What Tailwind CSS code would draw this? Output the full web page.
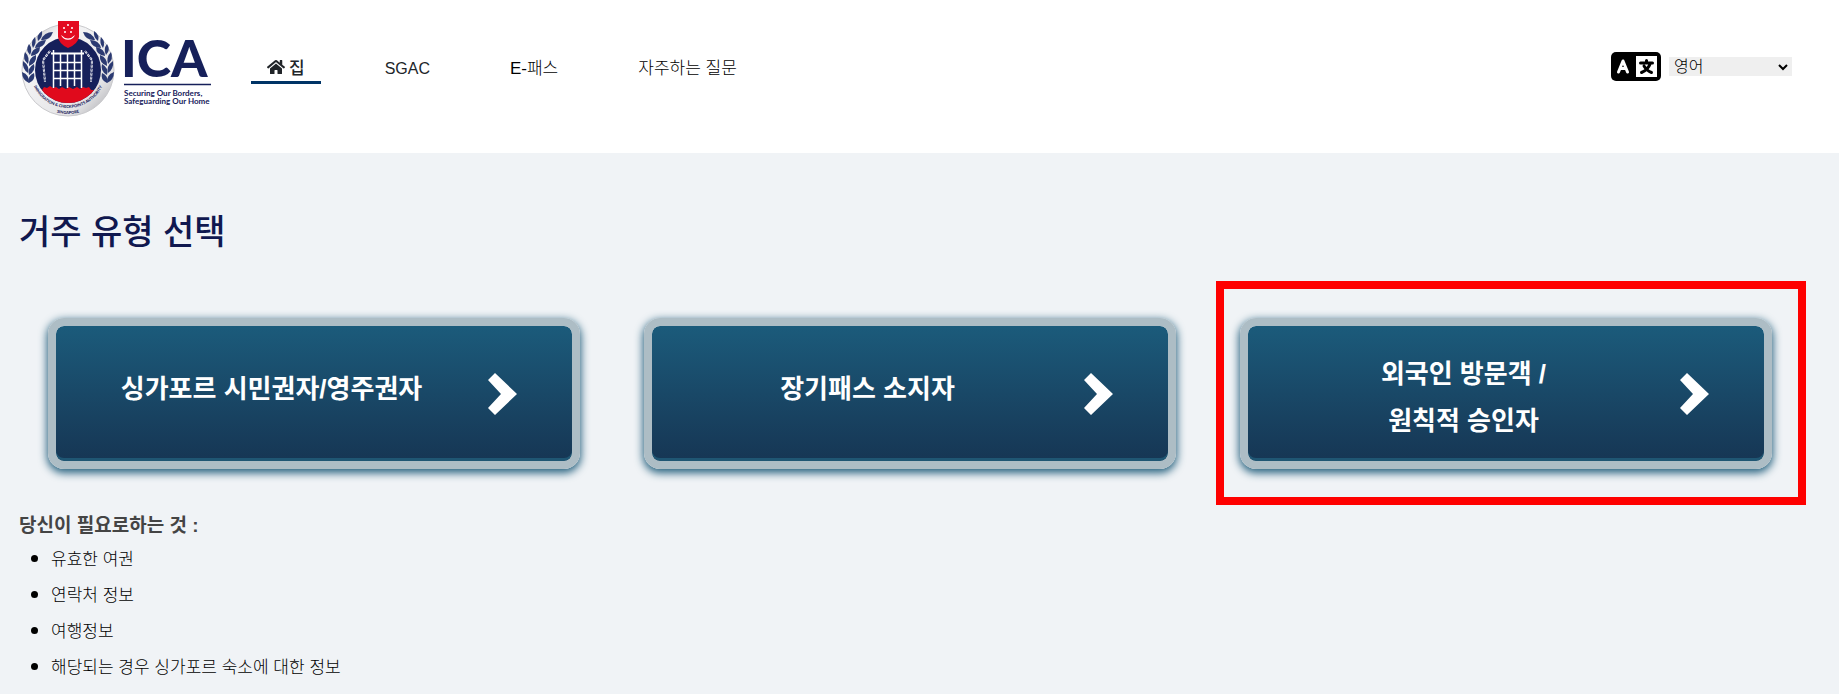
<!DOCTYPE html>
<html lang="ko">
  <head>
    <meta charset="UTF-8" />
    <meta name="viewport" content="width=device-width, initial-scale=1.0" />
    <title>ICA - 거주 유형 선택</title>
    <script src="https://cdn.jsdelivr.net/npm/@tailwindcss/browser@4"></script>
    <style>
      body {
        font-family: "Liberation Sans", "Noto Sans CJK KR", sans-serif;
      }
    </style>
  </head>
  <body class="min-h-screen bg-[#f0f3f6] text-[#212529]">
    <header class="bg-white flex items-start pl-4 pr-[47px] pb-8">
      <a href="#" class="mt-4 shrink-0" aria-label="ICA">
        <svg class="w-[200px] h-[105px]" viewBox="16 16 200 105">
          <defs>
            <linearGradient id="silver" x1="0" y1="0" x2="1" y2="1">
              <stop offset="0" stop-color="#b5b5b8" />
              <stop offset="0.25" stop-color="#f6f6f7" />
              <stop offset="0.75" stop-color="#e4e4e6" />
              <stop offset="1" stop-color="#a2a2a6" />
            </linearGradient>
            <clipPath id="disc"><circle cx="68" cy="70" r="33" /></clipPath>
            <path id="arcOuter" d="M30 70 A38 38 0 0 0 106 70" />
            <path id="arcInner" d="M24 70 A44 44 0 0 0 112 70" />
            <g id="laurel" fill="#2b3a72">
              <path d="M53 32 q-9 0 -12 8 q9 1 12 -8z" />
              <path d="M42 31 q-6 4 -4 10 q5 -4 4 -10z" />
              <path d="M46 40 q-9 0 -11 8 q9 0 11 -8z" />
              <path d="M35 37 q-5 5 -2 11 q4 -5 2 -11z" />
              <path d="M40 47 q-9 2 -9 9 q9 -1 9 -9z" />
              <path d="M29 44 q-4 6 1 11 q3 -6 -1 -11z" />
              <path d="M36 55 q-8 3 -7 11 q8 -3 7 -11z" />
              <path d="M25 52 q-3 7 3 12 q2 -7 -3 -12z" />
              <path d="M34 64 q-7 4 -5 11 q7 -4 5 -11z" />
              <path d="M23 61 q-1 8 5 12 q2 -7 -5 -12z" />
              <path d="M34 73 q-7 3 -5 10 q7 -3 5 -10z" />
              <path d="M22 72 q0 8 7 11 q1 -8 -7 -11z" />
            </g>
          </defs>
          <circle cx="68" cy="70" r="46" fill="url(#silver)" stroke="#c9c9cc" />
          <use href="#laurel" />
          <use href="#laurel" transform="translate(136 0) scale(-1 1)" />
          <circle cx="68" cy="70" r="33" fill="#16205a" />
          <g clip-path="url(#disc)">
            <path
              d="M34 110 V91 l8 -1 2 -3 3 1 3 -2 3 2 3 -1 3 2 3 -2 4 2 3 -2 4 2 4 -2 3 2 3 -2 3 1 3 -1 2 3 h12 V110z"
              fill="#e00a1c"
            />
          </g>
          <!-- portcullis -->
          <g fill="none" stroke="#fff">
            <path d="M51 53.500H84" stroke-width="2" />
            <path d="M53.500 50V88M60.500 54V86M67.500 54V88M74.500 54V86M81.500 50V88" stroke-width="1.500" />
            <path d="M54 62.500H82M54 70.500H82M54 78.500H82" stroke-width="1.500" />
          </g>
          <!-- chains -->
          <g fill="none" stroke="#fff" stroke-width="2" stroke-dasharray="3 1">
            <path d="M50 51 L43 60 L45 82" />
            <path d="M85 51 L92 60 L91 82" />
          </g>
          <path
            d="M50 51 L43 60 L45 82M85 51 L92 60 L91 82"
            fill="none"
            stroke="#16205a"
            stroke-width="0.700"
            stroke-dasharray="2 2"
          />
          <!-- shield -->
          <path d="M58 21 H79 V37 Q78 44 68 48 Q59 44 58 37z" fill="#e30b20" />
          <path d="M61 35 A7.500 7.500 0 0 0 75 35 Q68 42 61 35z" fill="#fff" />
          <g fill="#fff">
            <circle cx="68" cy="25" r="1" />
            <circle cx="64" cy="28" r="1" />
            <circle cx="72" cy="28" r="1" />
            <circle cx="65" cy="32" r="1" />
            <circle cx="71" cy="32" r="1" />
          </g>
          <g fill="#16205a" font-family="Lato, sans-serif" font-weight="900">
            <text font-size="4" text-anchor="middle">
              <textPath href="#arcOuter" startOffset="50%">IMMIGRATION &amp; CHECKPOINTS AUTHORITY</textPath>
            </text>
            <text font-size="4" text-anchor="middle">
              <textPath href="#arcInner" startOffset="50%">SINGAPORE</textPath>
            </text>
            <text x="121" y="77" font-size="52">ICA</text>
          </g>
          <path d="M124 84.500H211" stroke="#16205a" stroke-width="1.500" />
          <g fill="#16205a" font-family="Lato, sans-serif" font-weight="700" font-size="8">
            <text x="124" y="96">Securing Our Borders,</text>
            <text x="124" y="104">Safeguarding Our Home</text>
          </g>
        </svg>
      </a>

      <nav class="flex items-start gap-12 ml-[35px] mt-[52px] text-[17px] leading-8">
        <a href="#" class="flex items-center gap-1 px-4 h-8 border-b-3 border-[#003466] font-medium">
          <svg class="w-[18px] h-4" viewBox="0 0 576 512" fill="currentColor">
            <path
              d="M280 148 96 300v164a16 16 0 0 0 16 16h112a16 16 0 0 0 16-16v-96a16 16 0 0 1 16-16h64a16 16 0 0 1 16 16v96a16 16 0 0 0 16 16h112a16 16 0 0 0 16-16V300L296 148a12 12 0 0 0-16 0zM572 251 488 182V44a12 12 0 0 0-12-12h-56a12 12 0 0 0-12 12v72L318 43a48 48 0 0 0-61 0L4 251a12 12 0 0 0-2 17l26 31a12 12 0 0 0 17 2L280 107a12 12 0 0 1 15 0l236 194a12 12 0 0 0 17-2l25-31a12 12 0 0 0-1-17z"
            />
          </svg>
          <span class="pt-1">집</span>
        </a>
        <a href="#" class="px-4 pt-px text-base leading-8">SGAC</a>
        <a href="#" class="px-4 pt-px font-light text-black">E-패스</a>
        <a href="#" class="px-4 pt-px font-light text-black">자주하는 질문</a>
      </nav>

      <div class="ml-auto mt-[52px] flex items-center gap-2">
        <svg class="w-[50px] h-[29px]" viewBox="0 0 50 29">
          <rect width="50" height="29" rx="5" />
          <rect x="25" y="4" width="21" height="21" fill="#fff" />
          <path
            d="M7.500 20 L12 9 L16.500 20 M9 16.500 H15"
            fill="none"
            stroke="#fff"
            stroke-width="3"
            stroke-linecap="round"
            stroke-linejoin="round"
          />
          <path
            d="M29.500 11 H41.500 M35.500 8.500 V11 M39.500 11 Q37 18 30.500 20.500 M33 14 Q36 19 40.500 20.500"
            fill="none"
            stroke="#000"
            stroke-width="3"
            stroke-linecap="round"
          />
        </svg>
        <div class="relative">
          <select
            aria-label="언어"
            class="block appearance-none w-[123px] h-[19px] bg-[#efefef] pl-[5px] pr-6 text-base leading-[19px] font-light text-black"
          >
            <option>영어</option>
          </select>
          <svg class="absolute right-1 top-1.5 w-2.5 h-2 pointer-events-none" viewBox="0 0 10 8">
            <path d="M1 2 L5 6 L9 2" fill="none" stroke="#000" stroke-width="2" />
          </svg>
        </div>
      </div>
    </header>

    <main class="pt-[54px] pb-2">
      <h1 class="px-[19px] text-[34px] leading-[50px] font-medium text-[#10184f]">거주 유형 선택</h1>

      <div class="mt-[61px] pl-12 pr-[67px] grid grid-cols-3 gap-16">
        <button
          type="button"
          class="flex items-center h-[151px] pr-[55px] rounded-2xl border-8 border-[#adbdc5] bg-linear-to-b from-[#1b5b7b] to-[#163654] bg-clip-padding text-white text-[26px] leading-[47px] font-bold shadow-[inset_0_-3px_0_#1f5673,0_3px_8px_1px_#27627f]"
        >
          <span class="flex-1 pb-2">싱가포르 시민권자/영주권자</span>
          <svg class="w-[30px] h-[42px] shrink-0" viewBox="0 0 30 42" fill="currentColor">
            <path d="M8 0 L30 21 L8 42 L1 35 L14 21 L1 7z" />
          </svg>
        </button>
        <button
          type="button"
          class="flex items-center h-[151px] pr-[55px] rounded-2xl border-8 border-[#adbdc5] bg-linear-to-b from-[#1b5b7b] to-[#163654] bg-clip-padding text-white text-[26px] leading-[47px] font-bold shadow-[inset_0_-3px_0_#1f5673,0_3px_8px_1px_#27627f]"
        >
          <span class="flex-1 pb-2">장기패스 소지자</span>
          <svg class="w-[30px] h-[42px] shrink-0" viewBox="0 0 30 42" fill="currentColor">
            <path d="M8 0 L30 21 L8 42 L1 35 L14 21 L1 7z" />
          </svg>
        </button>
        <div class="relative">
          <button
            type="button"
            class="flex items-center w-full h-[151px] pr-[55px] rounded-2xl border-8 border-[#adbdc5] bg-linear-to-b from-[#1b5b7b] to-[#163654] bg-clip-padding text-white text-[26px] leading-[47px] font-bold shadow-[inset_0_-3px_0_#1f5673,0_3px_8px_1px_#27627f]"
          >
            <span class="flex-1 pt-2">외국인 방문객 /<br />원칙적 승인자</span>
            <svg class="w-[30px] h-[42px] shrink-0" viewBox="0 0 30 42" fill="currentColor">
              <path d="M8 0 L30 21 L8 42 L1 35 L14 21 L1 7z" />
            </svg>
          </button>
          <!-- highlight frame -->
          <div class="absolute -top-[37px] -bottom-9 -left-6 -right-[34px] border-8 border-[#fe0000] pointer-events-none"></div>
        </div>
      </div>

      <section class="mt-[43px] px-[19px]">
        <h2 class="text-[19px] leading-7 font-bold text-[#444]">당신이 필요로하는 것 :</h2>
        <ul class="list-disc pl-8 font-['Noto_Sans_CJK_KR',sans-serif] text-[17px] leading-9 font-light text-black">
          <li>유효한 여권</li>
          <li>연락처 정보</li>
          <li>여행정보</li>
          <li>해당되는 경우 싱가포르 숙소에 대한 정보</li>
        </ul>
      </section>
    </main>
  </body>
</html>
